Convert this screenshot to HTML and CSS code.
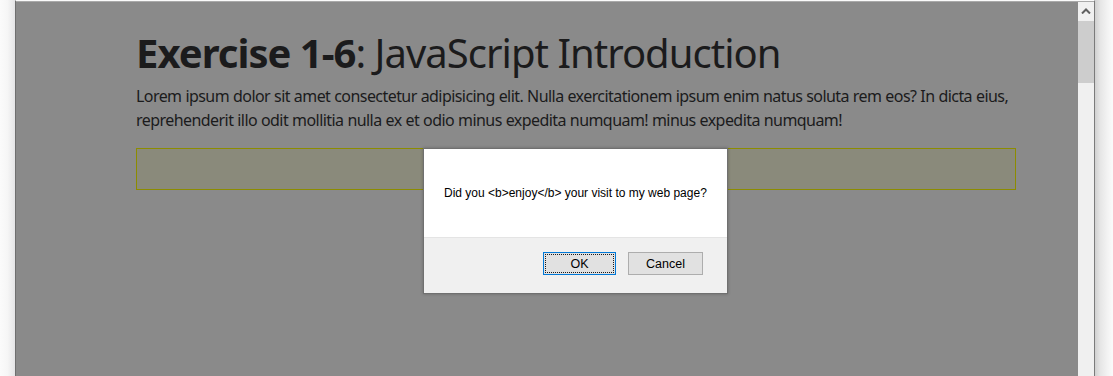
FILE: index.html
```html
<!DOCTYPE html>
<html lang="en">
<head>
    <meta charset="UTF-8">
    <meta name="viewport" content="width=device-width, initial-scale=1.0">
    <title>Exercise 1-6</title>
    <link rel="stylesheet" href="styles.css">
</head>
<body>

    <div class="shadow-left"></div>

    <!-- Browser window -->
    <div class="window">
        <div class="viewport">
            <div class="page">
                <h1><b>Exercise 1-6</b>: JavaScript Introduction</h1>
                <p>Lorem ipsum dolor sit amet consectetur adipisicing elit. Nulla exercitationem ipsum enim natus soluta rem eos? In dicta eius, reprehenderit illo odit mollitia nulla ex et odio minus expedita numquam! minus expedita numquam!</p>
                <div class="output-box"></div>
            </div>

            <!-- confirm() dialog -->
            <div class="dialog">
                <div class="dialog-body">Did you &lt;b&gt;enjoy&lt;/b&gt; your visit to my web page?</div>
                <div class="dialog-footer">
                    <button class="btn btn-ok">OK</button>
                    <button class="btn">Cancel</button>
                </div>
            </div>
        </div>

        <div class="scrollbar">
            <div class="arrow-up">
                <svg width="10" height="6" viewBox="0 0 10 6"><path d="M1 5.5 L5 1.5 L9 5.5" fill="none" stroke="#606060" stroke-width="2"/></svg>
            </div>
            <div class="thumb"></div>
        </div>
    </div>

    <div class="shadow-right"></div>

</body>
</html>
```

FILE: styles.css
```css
body {
    margin: 0;
    height: 376px;
    display: flex;
    overflow: hidden;
    background: #fafafa;
    font-family: "Noto Sans", "Open Sans", sans-serif;
}
.shadow-left {
    width: 15px;
    background: linear-gradient(to right, #fbfbfb 0%, #f6f6f6 50%, #e4e4e6 100%);
}
.shadow-right {
    width: 18px;
    background: linear-gradient(to right, #d0d0d0 0%, #e6e6e6 30%, #f3f3f3 70%, #fbfbfb 100%);
}
.window {
    width: 1079px;
    display: flex;
    border-top: 1px solid #fafafa;
    box-shadow: inset 0 1px 0 #a9a9a9;
    border-left: 1px solid #6f6f6f;
    border-right: 1px solid #7a7a7a;
    padding-top: 1px;
}
.viewport {
    position: relative;
    flex: 1;
    background: #8a8a8a;
    color: #1b1b1c;
}
.page {
    padding: 27px 0 0 120px;
    width: 880px;
}
h1 {
    margin: 0 0 7px;
    font-size: 40px;
    font-weight: 400;
    line-height: 48px;
    letter-spacing: -0.98px;
}
h1 b {
    font-weight: 700;
}
p {
    margin: 0 0 16px;
    font-size: 16px;
    line-height: 24px;
    letter-spacing: -0.56px;
    word-spacing: 0.3px;
}
.output-box {
    height: 40px;
    border: 1px solid #8c8c00;
    background: #8a8a7b;
}
.dialog {
    position: absolute;
    left: 407px;
    top: 146px;
    width: 303px;
    border: 1px solid #707070;
    box-shadow: 0 0 3px rgba(0, 0, 0, 0.25);
    font-family: "Liberation Sans", Arial, sans-serif;
    font-size: 12px;
    color: #000;
}
.dialog-body {
    background: #fff;
    height: 88px;
    padding: 0 20px;
    line-height: 88px;
    white-space: nowrap;
    border-bottom: 1px solid #e4e4e4;
}
.dialog-footer {
    background: #f0f0f0;
    height: 55px;
    display: flex;
    justify-content: flex-end;
    align-items: flex-start;
    gap: 12px;
    padding: 14px 24px 0 0;
    box-sizing: border-box;
}
.btn {
    width: 75px;
    height: 23px;
    border: 1px solid #adadad;
    background: #e1e1e1;
    font-family: "Liberation Sans", Arial, sans-serif;
    font-size: 12.5px;
    color: #000;
    padding: 0;
}
.btn-ok {
    width: 73px;
    border: 1px solid #0078d7;
    outline: 1px dotted #1a1a1a;
    outline-offset: -3px;
}
.scrollbar {
    width: 16px;
    background: #f0f0f0;
    display: flex;
    flex-direction: column;
}
.arrow-up {
    height: 17px;
    display: flex;
    justify-content: center;
    align-items: center;
}
.thumb {
    margin: 2px 0 0 0;
    height: 62px;
    background: #cdcdcd;
}
```
